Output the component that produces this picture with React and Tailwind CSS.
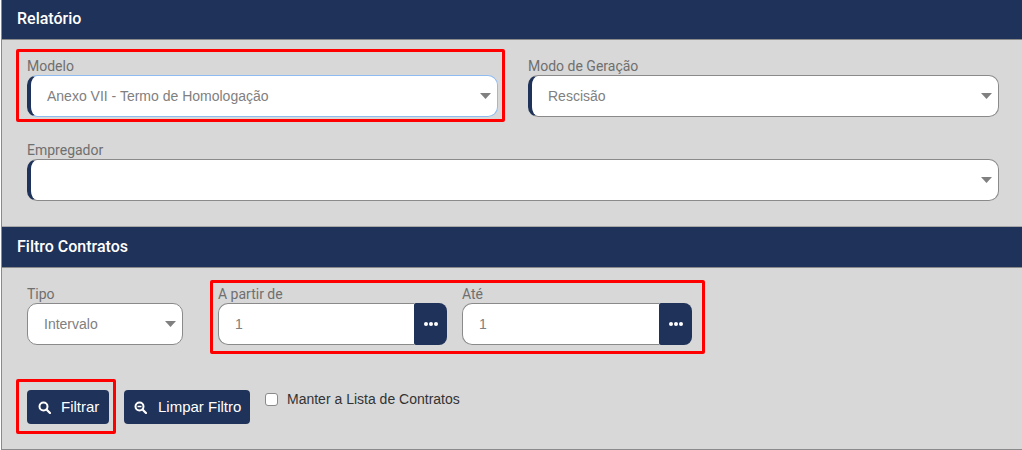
const Caret = () => (
  <svg width="11" height="6" viewBox="0 0 11 6" className="absolute right-[6px] top-[17px]">
    <path d="M0 0 H11 L5.5 6 Z" fill="#808080" />
  </svg>
);

const FieldLabel = ({ children }) => (
  <div className="h-[16px] text-[14px] leading-[14px] text-[#6f6f6f] font-['Roboto',sans-serif]">{children}</div>
);

const SelectField = ({ label, value, accent, focused, className }) => (
  <div className={className}>
    <FieldLabel>{label}</FieldLabel>
    <div
      className={`relative h-[42px] bg-white rounded-[10px] border pl-[16px] flex items-center text-[14px] text-[#808080] font-['Liberation_Sans',sans-serif] ${focused ? 'border-[#8ebcf0]' : 'border-[#8a8a8a]'} ${accent ? 'border-l-[4px] border-l-[#1f3259]' : ''}`}
    >
      {value}
      <Caret />
    </div>
  </div>
);

const DotsField = ({ label, className }) => (
  <div className={className}>
    <FieldLabel>{label}</FieldLabel>
    <div className="flex h-[42px]">
      <div className="flex-1 bg-white border border-[#8a8a8a] border-r-0 rounded-l-[10px] pl-[16px] flex items-center text-[14px] text-[#808080] font-['Liberation_Sans',sans-serif]">
        1
      </div>
      <button type="button" className="w-[33px] bg-[#1f3259] rounded-r-[8px] rounded-l-[2px] flex items-center justify-center gap-px">
        <span className="w-[4px] h-[4px] rounded-full bg-white" />
        <span className="w-[4px] h-[4px] rounded-full bg-white" />
        <span className="w-[4px] h-[4px] rounded-full bg-white" />
      </button>
    </div>
  </div>
);

const SearchIcon = ({ minus }) => (
  <svg width="13" height="13" viewBox="0 0 13 13" fill="none" stroke="white" className="shrink-0">
    <circle cx="5.5" cy="5.5" r="4" strokeWidth="2" />
    <path d="M8.5 8.5 L12 12" strokeWidth="2.2" strokeLinecap="round" />
    {minus && <path d="M3.5 5.5 H7.5" strokeWidth="1.5" />}
  </svg>
);

const Header = ({ children, className }) => (
  <div className={`bg-[#1f3259] border-b border-[#8a8a8a] pl-[15px] flex items-center text-white text-[16px] font-medium font-['Roboto',sans-serif] ${className}`}>
    {children}
  </div>
);

export default function App() {
  return (
    <div className="relative w-[1022px] h-[450px] bg-white overflow-hidden">
      <div className="h-[450px] ml-px bg-[#d8d8d8] border-l border-b border-[#8a8a8a]">
        <Header className="h-[40px] pb-[2px]">Relatório</Header>

        <div className="h-[186px] pl-[25px] pr-[23px] pt-[19px]">
          <div className="flex gap-[30px]">
            <SelectField className="w-[471px]" label="Modelo" value="Anexo VII - Termo de Homologação" accent focused />
            <SelectField className="w-[471px]" label="Modo de Geração" value="Rescisão" accent />
          </div>
          <SelectField className="mt-[26px]" label="Empregador" value="" accent />
        </div>

        <div className="border-t border-[#a8a8a8]">
          <Header className="h-[41px]">Filtro Contratos</Header>
        </div>

        <div className="px-[25px] pt-[19px]">
          <div className="flex">
            <SelectField className="w-[156px]" label="Tipo" value="Intervalo" />
            <DotsField className="w-[229px] ml-[35px]" label="A partir de" />
            <DotsField className="w-[230px] ml-[15px]" label="Até" />
          </div>

          <div className="flex mt-[45px] items-start">
            <button type="button" className="w-[82px] h-[34px] bg-[#1f3259] rounded-[4px] flex items-center pl-[11px] gap-[10px] text-white text-[15px] font-['Liberation_Sans',sans-serif]">
              <SearchIcon />
              Filtrar
            </button>
            <button type="button" className="w-[126px] h-[34px] ml-[15px] bg-[#1f3259] rounded-[4px] flex items-center pl-[10px] gap-[11px] text-white text-[15px] font-['Liberation_Sans',sans-serif]">
              <SearchIcon minus />
              Limpar Filtro
            </button>
            <div className="ml-[15px] mt-[3px] flex items-center gap-[9px] h-[13px] text-[14px] text-[#333333] font-['Liberation_Sans',sans-serif]">
              <span className="w-[13px] h-[13px] bg-white border border-[#8a8a8a] rounded-[3px]" />
              Manter a Lista de Contratos
            </div>
          </div>
        </div>
      </div>

      {/* anotações em vermelho por cima do formulário */}
      <div className="absolute left-[16px] top-[49px] w-[489px] h-[73px] border-[3px] border-[#ff0000] rounded-[2px]" />
      <div className="absolute left-[210px] top-[280px] w-[495px] h-[74px] border-[3px] border-[#ff0000] rounded-[2px]" />
      <div className="absolute left-[16px] top-[379px] w-[100px] h-[55px] border-[3px] border-[#ff0000] rounded-[2px]" />
    </div>
  );
}
